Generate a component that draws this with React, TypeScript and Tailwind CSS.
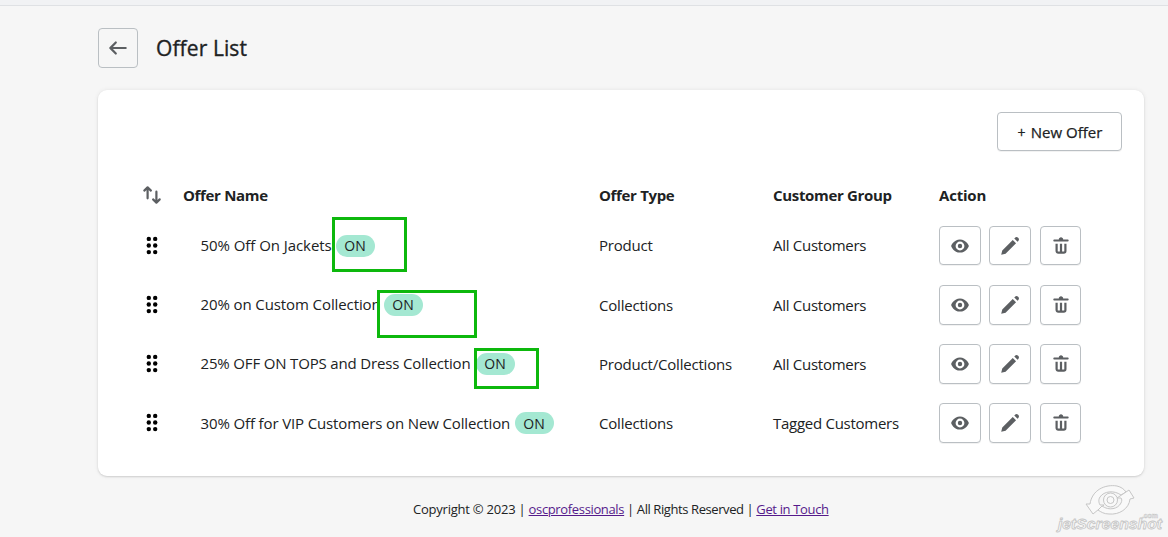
import React from "react";

const paths = {
  back: "M17 9H5.414l3.293-3.293a.999.999 0 1 0-1.414-1.414l-5 5a.999.999 0 0 0 0 1.414l5 5a.997.997 0 0 0 1.414 0 .999.999 0 0 0 0-1.414L5.414 11H17a1 1 0 1 0 0-2z",
  sort: "M5.293 2.293a.997.997 0 0 1 1.414 0l3 3a1 1 0 0 1-1.414 1.414L7 5.414V13a1 1 0 1 1-2 0V5.414L3.707 6.707a1 1 0 0 1-1.414-1.414l3-3zM13 7a1 1 0 0 1 2 0v7.585l1.293-1.292a.999.999 0 1 1 1.414 1.414l-3 3a.997.997 0 0 1-1.414 0l-3-3a1 1 0 0 1 1.414-1.414L13 14.585V7z",
  view: "M17.928 9.628c-.092-.229-2.317-5.628-7.929-5.628s-7.837 5.399-7.929 5.628a1.017 1.017 0 0 0 0 .744c.092.229 2.317 5.628 7.929 5.628s7.837-5.399 7.929-5.628a1.017 1.017 0 0 0 0-.744m-7.929 4.372a4 4 0 1 1 0-8 4 4 0 0 1 0 8m0-6a2 2 0 1 0 0 4 2 2 0 0 0 0-4",
  edit: "M13.877 3.123l3.001 3.002.5-.5a2.123 2.123 0 1 0-3.002-3.002l-.5.5zM15.5 7.5l-3.002-3.002-9.524 9.525-.974 3.977 3.976-.974L15.5 7.5z",
  trash: "M8 3.994c0-1.101.895-1.994 2-1.994s2 .893 2 1.994h4c.552 0 1 .446 1 .997a1 1 0 0 1-1 .997h-12c-.552 0-1-.447-1-.997s.448-.997 1-.997h4zm-3 10.514v-6.508h2v6.508a.5.5 0 0 0 .5.498h1.5v-7.006h2v7.006h1.5a.5.5 0 0 0 .5-.498v-6.508h2v6.508a2.495 2.495 0 0 1-2.496 2.492h-5.008c-1.379 0-2.496-1.116-2.496-2.492z",
};

function Icon({ name }: { name: keyof typeof paths }) {
  return (
    <svg viewBox="0 0 20 20" className="h-[22px] w-[22px] shrink-0 fill-[#5c5f62]" fillRule="evenodd">
      <path d={paths[name]} />
    </svg>
  );
}

function DragHandle() {
  return (
    <svg viewBox="0 0 12 20" className="ml-[48px] h-5 w-3 fill-black">
      {[2.9, 9.5, 16.1].map((y) => (
        <g key={y}>
          <circle cx="2.8" cy={y} r="2.2" />
          <circle cx="9.2" cy={y} r="2.2" />
        </g>
      ))}
    </svg>
  );
}

const button = "flex items-center justify-center rounded-[4px] border border-[#babfc3] bg-white shadow-[0_1px_0_rgba(0,0,0,0.05)]";
const columns = "grid grid-cols-[85px_416px_174px_166px_1fr] items-center";

const offers = [
  { name: "50% Off On Jackets", nameClass: "w-[135px] tracking-[-0.06px]", type: "Product", group: "All Customers", mark: "left-[-4px] top-[-18px] h-[55px] w-[75px]" },
  { name: "20% on Custom Collection", nameClass: "w-[183px] pb-px tracking-[-0.1px]", type: "Collections", group: "All Customers", mark: "left-[-7px] top-[-4px] h-[48px] w-[100px]" },
  { name: "25% OFF ON TOPS and Dress Collection", nameClass: "w-[275px] pb-px tracking-[-0.16px]", type: "Product/Collections", group: "All Customers", mark: "left-[-2px] top-[-5px] h-[41px] w-[65px]" },
  { name: "30% Off for VIP Customers on New Collection", nameClass: "w-[314px] tracking-[-0.13px]", type: "Collections", group: "Tagged Customers", mark: "" },
];

function Watermark() {
  return (
    <svg viewBox="0 0 114 52" className="absolute right-0 bottom-0 h-[52px] w-[114px]" fill="#f9f9f9" stroke="#c6c6c6" strokeWidth="1" strokeLinejoin="round">
      <path d="M36 19C38 5 51-1 63 1C67 2 70 4 72 7L67 10C60 5 50 6 46 12C44 15 45 18 46 20L50 20L39 29L32 19Z" />
      <path d="M75 5L80 13L76 14C75 24 65 30 55 29C50 29 47 27 44 25L48 21C55 26 64 24 67 18C68 16 68 14 67 13L63 13Z" />
      <circle cx="56.5" cy="15" r="7" />
      <circle cx="56.5" cy="15" r="3.5" />
      <text x="4" y="43.5" fontFamily="Liberation Sans, sans-serif" fontSize="14.5" fontWeight="700" fontStyle="italic" textLength="104" lengthAdjust="spacingAndGlyphs" strokeWidth="0.8">jetScreenshot</text>
      <text x="88" y="33" fontFamily="Liberation Sans, sans-serif" fontSize="7" fontWeight="700" textLength="16" strokeWidth="0.5">.com</text>
    </svg>
  );
}

export default function App() {
  return (
    <div className="relative flex h-[537px] w-[1168px] flex-col overflow-hidden bg-[#f6f6f6] font-['Open_Sans','Noto_Sans',sans-serif] text-[15px] text-[#202223]">
      <div className="h-[6px] shrink-0 border-b border-[#dfe1e4] bg-[#f1f2f4]" />
      <header className="mt-[22px] ml-[98px] flex h-10 shrink-0 items-center">
        <button className="flex h-10 w-10 items-center justify-center rounded-[4px] border border-[#babfc3]" aria-label="Back">
          <Icon name="back" />
        </button>
        <h1 className="ml-[18px] text-[21px] leading-8 tracking-[0.1px] whitespace-nowrap [-webkit-text-stroke:0.35px_#202223]">Offer List</h1>
      </header>
      <main className="mt-[22px] ml-[98px] flex h-[386px] w-[1046px] shrink-0 flex-col rounded-[9px] bg-white shadow-[0_0_5px_rgba(23,24,24,0.07),0_1px_2px_rgba(0,0,0,0.13)]">
        <div className="flex justify-end pt-[22px] pr-[22px]">
          <button className={`${button} h-[39.4px] w-[125px] gap-[5px] pt-[1.5px] pl-px tracking-[0.02px] whitespace-nowrap [-webkit-text-stroke:0.25px_#202223]`}><span className="text-[14px]">+</span> New Offer</button>
        </div>
        <div className={`${columns} mt-[22px] h-[42.6px] text-[15px] font-bold tracking-[-0.33px] whitespace-nowrap`}>
          <span className="pl-[43px]"><Icon name="sort" /></span>
          <span className="pt-px">Offer Name</span>
          <span className="pt-px">Offer Type</span>
          <span className="pt-px">Customer Group</span>
          <span className="pt-px tracking-[-0.2px]">Action</span>
        </div>
        {offers.map((offer) => (
          <div key={offer.name} className={`${columns} h-[59.2px] whitespace-nowrap`}>
            <DragHandle />
            <div className="flex items-center pl-[18px]">
              <span className={`${offer.nameClass} -ml-[0.5px] mr-[0.5px] shrink-0`}>{offer.name}</span>
              <span className="relative flex h-[22px] w-[39px] items-center justify-center rounded-full bg-[#a4e8d2] pr-px text-[14px]">
                ON
                {offer.mark && <span className={`absolute border-[3px] border-[#0db80d] ${offer.mark}`} />}
              </span>
            </div>
            <span className="tracking-[-0.2px]">{offer.type}</span>
            <span className="tracking-[-0.27px]">{offer.group}</span>
            <div className="flex">
              <button className={`${button} h-[39.6px] w-[42px]`} aria-label="View"><Icon name="view" /></button>
              <button className={`${button} ml-2 h-[39.6px] w-[42px]`} aria-label="Edit"><Icon name="edit" /></button>
              <button className={`${button} ml-[9px] h-[39.6px] w-[41px]`} aria-label="Delete"><Icon name="trash" /></button>
            </div>
          </div>
        ))}
      </main>
      <footer className="flex h-[18px] shrink-0 pl-[413px] pt-[24px] text-[13px] leading-[18px] tracking-[-0.35px] whitespace-pre">
        <span className="tracking-[-0.23px]">Copyright © 2023 | </span><a className="text-[#551a8b] underline">oscprofessionals</a><span className="tracking-[-0.41px]"> | All Rights Reserved | </span><a className="text-[#551a8b] underline">Get in Touch</a>
      </footer>
      <Watermark />
    </div>
  );
}
